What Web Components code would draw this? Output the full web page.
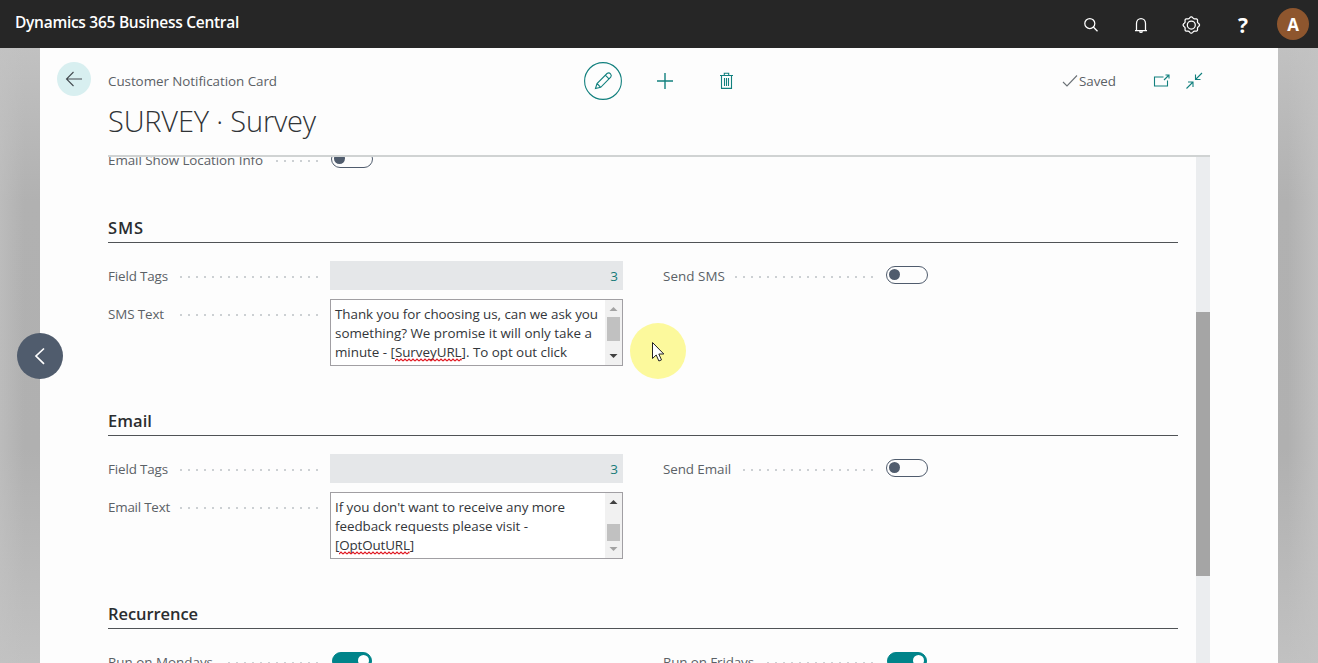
<!DOCTYPE html>
<html lang="en">
<head>
<meta charset="utf-8">
<title>Customer Notification Card</title>
<style>
html,body{margin:0;height:100%;overflow:hidden}
body{font-family:"Open Sans","Noto Sans",sans-serif;font-size:13.4px;color:#5b6166}
</style>
</head>
<body>
<bc-app></bc-app>
<script>
const define=(name,html,setup)=>{
  const t=document.createElement('template');t.innerHTML=html;
  customElements.define(name,class extends HTMLElement{
    connectedCallback(){
      if(this.shadowRoot)return;
      this.attachShadow({mode:'open'}).append(t.content.cloneNode(true));
      if(setup)setup.call(this,this.shadowRoot);
    }
  });
};

// Text run whose tracking is adjusted to a given advance width.
define('fit-text',`<style>:host{display:inline-block;white-space:pre;flex:none}span{display:inline-block}</style><span><slot></slot></span>`,function(r){
  const w=+this.getAttribute('w');
  if(!w)return;
  const s=r.querySelector('span');
  const n=this.textContent.length;
  s.style.letterSpacing=((w-s.getBoundingClientRect().width)/n)+'px';
});

define('bc-toggle',`<style>
:host{display:block;box-sizing:border-box;width:42px;height:18px;border:1.4px solid #505c6d;border-radius:9px;position:relative;margin:-2px 0 0 1px}
i{display:block;width:11px;height:11px;border-radius:50%;background:#505c6d;margin:2.5px 2px}
:host([on]){width:40px;background:#00848a;border-color:#00848a;margin-left:2px}
:host([on]) i{background:#fff;margin-left:25px}
</style><i></i>`);

define('bc-field',`<style>
:host{display:grid;grid-template-columns:211px 1fr;column-gap:11px}
.l{display:flex;height:29px;align-items:center}
.d{flex:1;height:2px;margin:2px 0 0 10px;background:repeating-linear-gradient(to left,transparent 0 1px,#ccd0d3 1px 3px,transparent 3px 8px)}
.v{min-height:29px;display:flex;align-items:center}
</style><div class="l"><fit-text></fit-text><span class="d"></span></div><div class="v"><slot></slot></div>`,function(r){
  const f=r.querySelector('fit-text'),n=document.createElement('fit-text');
  n.setAttribute('w',this.getAttribute('w'));n.textContent=this.getAttribute('label');f.replaceWith(n);
});

define('bc-count',`<style>:host{display:flex;box-sizing:border-box;width:293px;height:29px;background:#e5e7e9;color:#177b78;align-items:center;justify-content:flex-end;padding-right:5px;font-size:13.5px}</style><slot></slot>`);

define('bc-textarea',`<style>
:host{display:flex;box-sizing:border-box;width:293px;height:67px;border:1px solid #a19fa3;background:#fff;color:#33363a;justify-content:space-between;flex:none}
.t{padding:5px 0 0 4px;line-height:19px;display:flex;flex-direction:column;align-items:flex-start}
.s{width:17px;background:#f1f1f1;display:flex;flex-direction:column;align-items:center}
.s svg{width:17px;height:17px;flex:none}
.b{width:13px;background:#c1c1c1}
</style><div class="t"><slot></slot></div><div class="s"><svg viewBox="0 0 17 17"><path class="u" d="M4.5 11h8L8.500 7z"/></svg><div class="g"></div><div class="b"></div><span style="flex:1"></span><svg viewBox="0 0 17 17"><path class="w" d="M4.500 6h8l-4 4z"/></svg></div>`,function(r){
  const end=this.hasAttribute('end');
  r.querySelector('.g').style.height=end?'14px':'0';
  r.querySelector('.b').style.height=end?'17px':'24px';
  r.querySelector('.u').style.fill=end?'#404040':'#a3a3a3';
  r.querySelector('.w').style.fill=end?'#a3a3a3':'#404040';
});

define('spell-mark',`<style>:host{display:inline-block;position:relative}svg{position:absolute;left:0;bottom:0;width:100%;height:4px}</style><slot></slot><svg><defs><pattern id="p" width="4" height="4" patternUnits="userSpaceOnUse"><path d="M0 3l2-2 2 2" fill="none" stroke="#e0141e" stroke-width="1.100"/></pattern></defs><rect width="100%" height="4" fill="url(#p)"/></svg>`);

define('bc-section',`<style>
:host{display:block;height:193px}
.h{box-sizing:border-box;height:31px;border-bottom:1px solid #505356;display:flex;align-items:center;color:#2b2d30;font-size:16.500px;font-weight:600}
.g{display:grid;grid-template-columns:515px 1fr;column-gap:40px;padding-top:18px}
.c{display:flex;flex-direction:column;gap:9px}
</style><div class="h"><slot name="title"></slot></div><div class="g"><div class="c"><slot></slot></div><div class="c"><slot name="right"></slot></div></div>`);

define('bc-topbar',`<style>
:host{display:flex;box-sizing:border-box;height:48px;background:#262626;color:#fff;justify-content:space-between;padding:0 9px 0 15px;flex:none}
.n{font-weight:600;font-size:15.500px;line-height:45px}
.r{display:flex;align-items:center}
svg{fill:none;stroke:#fff;stroke-width:1.25}
.q{width:20px;text-align:center;font:700 21px/48px "Open Sans",sans-serif;margin:0 24px 0 32px;padding-top:1px}
.a{width:32px;height:32px;border-radius:50%;background:#8e562e;font-size:17px;font-weight:700;display:grid;place-items:center}
</style><span class="n"><fit-text w="224">Dynamics 365 Business Central</fit-text></span>
<div class="r">
<svg width="20" height="20" viewBox="0 0 20 20" style="margin:2px 30px 0 0"><circle cx="8.800" cy="8.500" r="5"/><path d="M12.300 12l4.200 4.200"/></svg>
<svg width="20" height="20" viewBox="0 0 20 20" style="margin:2px 30px 0 0"><path d="M4 15.500h12M5.500 15.500V8.500a4.500 5 0 0 1 9 0v7M8.500 16.500a1.600 1.300 0 0 0 3 0"/></svg>
<svg width="20" height="20" viewBox="0 0 20 20" style="margin:2px 0 0"><circle cx="10.300" cy="10" r="4"/><path id="gear" stroke-linejoin="round"/></svg>
<span class="q">?</span><span class="a">A</span></div>`,function(r){
  let d='';
  for(let i=0;i<=96;i++){const a=i/96*Math.PI*2,q=7.5+.7*Math.cos(8*a);d+=(i?'L':'M')+(10.3+q*Math.cos(a)).toFixed(2)+' '+(10+q*Math.sin(a)).toFixed(2);}
  r.querySelector('#gear').setAttribute('d',d+'Z');
});

define('bc-cardhead',`<style>
:host{display:grid;grid-template-columns:51px 1fr;box-sizing:border-box;height:107px;padding:14px 0 0 17px;flex:none}
.back{width:34px;height:34px;border-radius:50%;background:#d8eff0}
svg{display:block;fill:none;stroke:#12807e;stroke-width:1.100}
.back svg{stroke:#444b50}
.top{display:flex;height:38px;align-items:center}
.top>*{flex:none}
.title{font-size:29px;font-weight:300;color:#303336;line-height:40px;margin-top:1px}
</style><div class="back"><svg width="34" height="34" viewBox="0 0 34 34"><path d="M25 17H9.500M16.500 10l-7 7 7 7"/></svg></div>
<div><div class="top"><fit-text w="169">Customer Notification Card</fit-text>
<svg width="38" height="38" viewBox="0 0 38 38" style="margin-left:307px"><circle cx="19" cy="19" r="18.400"/><path d="M11.500 26.500l1.500-5L23 11.500q2-1.300 3.500.3t.2 3.400L16.700 25.300zM13 21.500l3.700 3.800M21.300 13.200l3.700 3.700"/></svg>
<svg width="18" height="18" viewBox="0 0 18 18" style="margin-left:34px"><path stroke-width="1.400" d="M9 1v16M1 9h16"/></svg>
<svg width="16" height="18" viewBox="0 0 16 18" style="margin-left:45px"><path d="M1 3.500h13M2.500 3.500v12.900h10V3.500M5.300 3.300V1.200h4.400v2.100M5.500 6v8M7.500 6v8M9.500 6v8"/></svg>
<svg width="16" height="14" viewBox="0 0 16 14" style="margin-left:327px;stroke:#6b7176"><path d="M1 8l4 4L15 1.500"/></svg>
<fit-text w="37" style="margin-left:1px">Saved</fit-text>
<svg width="18" height="16" viewBox="0 0 18 16" style="margin-left:37px"><path d="M10.500 4H1.500v9h13V7.500M11 7l5-5M12.500 2H16v3.600"/></svg>
<svg width="18" height="18" viewBox="0 0 18 18" style="margin-left:14px"><path d="M17 1l-6.500 6.500M10.500 2.500v5h5M1.500 16.500L8 10M3 10h5v5"/></svg>
</div><div class="title"><fit-text w="208">SURVEY · Survey</fit-text></div></div>`);

define('bc-scroll',`<style>
:host{display:flex;box-sizing:border-box;margin:0 68px;border-top:2px solid #d0d3d3;flex:1;overflow:hidden;min-height:0}
.c{width:1070px;margin-right:18px;flex:none}
.b{width:14px;background:#ebedef;padding-top:155px;height:351px;flex:none}
.b i{display:block;height:264px;background:#a5a5a5}
</style><div class="c"><slot></slot></div><div class="b"><i></i></div>`);

define('bc-app',`<style>
:host{display:flex;flex-direction:column;height:663px;width:1318px;overflow:hidden;position:relative;background:#bdbdbd}
main{flex:1;min-height:0;display:grid;grid-template-columns:40px 1238px 40px}
.side.l{background:linear-gradient(to right,rgba(195,195,195,.6),transparent 60%),linear-gradient(to bottom,#c1c1c1,#b1b1b1 25%,#b0b0b0 65%,#c1c1c1)}
.side.r{background:linear-gradient(to left,rgba(195,195,195,.8),transparent 75%),linear-gradient(to bottom,#c1c1c1,#b1b1b1 25%,#b0b0b0 65%,#c1c1c1)}
.card{background:#fdfdfd;display:flex;flex-direction:column;min-height:0}
.first{margin-top:-12px;margin-bottom:38px}
.prev{position:absolute;left:17px;top:333px}
.cur{position:absolute;left:630px;top:323px}
</style><bc-topbar></bc-topbar>
<main><div class="side l"></div><div class="card"><bc-cardhead></bc-cardhead><bc-scroll>
<bc-field class="first" label="Email Show Location Info" w="155"><bc-toggle></bc-toggle></bc-field>
<bc-section><fit-text slot="title" w="36">SMS</fit-text>
<bc-field label="Field Tags" w="60"><bc-count>3</bc-count></bc-field>
<bc-field label="SMS Text" w="56"><bc-textarea><fit-text w="263">Thank you for choosing us, can we ask you</fit-text><fit-text w="257">something? We promise it will only take a</fit-text><fit-text w="232">minute - [<spell-mark>SurveyURL</spell-mark>]. To opt out click</fit-text></bc-textarea></bc-field>
<bc-field slot="right" label="Send SMS" w="62"><bc-toggle></bc-toggle></bc-field></bc-section>
<bc-section><fit-text slot="title" w="44">Email</fit-text>
<bc-field label="Field Tags" w="60"><bc-count>3</bc-count></bc-field>
<bc-field label="Email Text" w="62"><bc-textarea end><fit-text w="230">If you don't want to receive any more</fit-text><fit-text w="193">feedback requests please visit -</fit-text><fit-text w="79">[<spell-mark>OptOutURL</spell-mark>]</fit-text></bc-textarea></bc-field>
<bc-field slot="right" label="Send Email" w="68"><bc-toggle></bc-toggle></bc-field></bc-section>
<bc-section><fit-text slot="title" w="90">Recurrence</fit-text>
<bc-field label="Run on Mondays" w="105"><bc-toggle on></bc-toggle></bc-field>
<bc-field slot="right" label="Run on Fridays" w="91"><bc-toggle on></bc-toggle></bc-field></bc-section>
</bc-scroll></div><div class="side r"></div></main>
<svg class="prev" width="46" height="46" viewBox="0 0 46 46"><circle cx="23" cy="23" r="23" fill="#505c6d"/><path d="M27 15.500L19 23l8 7.800" fill="none" stroke="#fff" stroke-width="1.700"/></svg>
<svg class="cur" width="56" height="56" viewBox="0 0 56 56"><circle cx="28" cy="28" r="28" fill="#fcf99c"/><path d="M22.500 19.500v16l3.700-3.500 2.700 6 2.600-1.100-2.700-5.900h5z" fill="#fff" stroke="#222" stroke-width="1"/></svg>`);
</script>
</body>
</html>
